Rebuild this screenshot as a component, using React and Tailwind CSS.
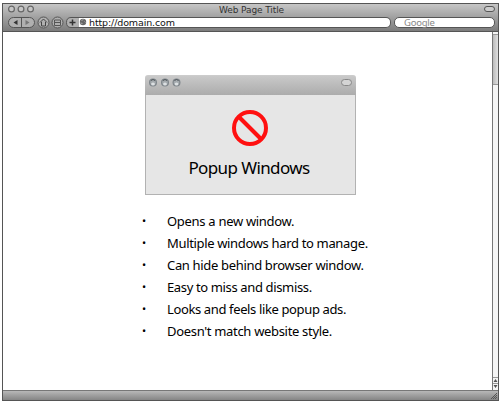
const points = [
  { text: "Opens a new window.", tracking: "tracking-[-0.3px]" },
  { text: "Multiple windows hard to manage.", tracking: "tracking-[-0.34px]" },
  { text: "Can hide behind browser window.", tracking: "tracking-[-0.33px]" },
  { text: "Easy to miss and dismiss.", tracking: "tracking-[-0.36px]" },
  { text: "Looks and feels like popup ads.", tracking: "tracking-[-0.37px]" },
  { text: "Doesn't match website style.", tracking: "tracking-[-0.32px]" },
];

function Toolbar() {
  return (
    <svg width="84" height="14" viewBox="0 0 84 14" className="block shrink-0" fill="none" stroke="#555" strokeWidth="1">
      <rect x="2.500" y="1.500" width="26" height="10" rx="5" fill="#b0b0b0" />
      <path d="M15.500 1v11" />
      <path d="M11.500 4v5L7.500 6.500z" fill="#333" stroke="none" />
      <path d="M19.500 4v5l4-2.500z" fill="#777" stroke="none" />
      <circle cx="37.500" cy="6.500" r="5.500" fill="#b0b0b0" />
      <path d="M34 6.500L37.500 3l3.500 3.500M35.500 6v4h4V6" stroke="#444" />
      <circle cx="51.500" cy="6.500" r="5.500" fill="#b0b0b0" />
      <path d="M48.500 4h6v5.500h-6zM48.500 6.500h6" stroke="#555" />
      <path d="M84 1.500H65q-4.500 0-4.500 5t4.500 5H84" fill="#b0b0b0" />
      <path d="M73 2h11v9h-11z" fill="#fff" stroke="none" />
      <path d="M63.500 6.500h6M66.500 3.500v6" stroke="#333" strokeWidth="1.500" />
      <circle cx="77" cy="6" r="3.200" fill="#666" stroke="none" />
      <path d="M75.500 4.500l2-1M74.500 7l2 .5M78.500 5.500l1 1" stroke="#bbb" strokeWidth=".8" />
    </svg>
  );
}

function Popup() {
  return (
    <div className="ml-[142px] mt-[43px] w-[211px]">
      <div className="flex h-5 justify-between rounded-t-[3px] border-t border-[#ccc] bg-linear-to-b from-[#c9c9c9] to-[#acacac] pl-1 pr-1">
        <svg width="34" height="16" viewBox="0 0 34 16" className="block">
          {[4, 16, 27.5].map((x) => (
            <g key={x}>
              <circle cx={x} cy="6.500" r="3.400" fill="#a4aaae" stroke="#7e858a" strokeWidth="1.200" />
              <path d={`M${x - 2} 4.500q2-2 4 0`} stroke="#50565b" fill="none" />
              <ellipse cx={x} cy="8" rx="1.900" ry="1.600" fill="#dce0e2" />
            </g>
          ))}
        </svg>
        <div className="mt-[3px] h-[7px] w-[11px] rounded-full border border-[#888] bg-[#d4d4d4]" />
      </div>
      <div className="flex h-[100px] flex-col items-center border border-t-0 border-[#b2b2b2] bg-[#e6e6e6]">
        <svg width="38" height="38" viewBox="0 0 38 38" className="mr-px mt-[14px] block" fill="none" stroke="#ff1010" strokeWidth="4">
          <circle cx="19" cy="19" r="16" />
          <path d="M8 8l22 22" />
        </svg>
        <div className="mr-[3px] mt-[9px] whitespace-nowrap text-[17px] leading-6 tracking-[-0.6px]">Popup Windows</div>
      </div>
    </div>
  );
}

export default function App() {
  return (
    <div className="h-[402px] w-[500px] overflow-hidden bg-white pl-0.5 pt-[3px] font-['Noto_Sans',sans-serif] text-black">
      <div className="flex h-[398px] w-[497px] flex-col border border-[#555]">
        <header className="h-7 shrink-0 border-b border-[#555] bg-linear-to-b from-[#c6c6c6] to-[#7c7c7c]">
          <div className="grid h-3 grid-cols-[60px_1fr_60px] items-center">
            <svg width="34" height="12" viewBox="0 0 34 12" className="block" fill="#c6c6c6" stroke="#666" strokeWidth="1.200">
              <circle cx="8.500" cy="5" r="2.900" />
              <circle cx="18" cy="5" r="2.900" />
              <circle cx="27.500" cy="5" r="2.900" />
            </svg>
            <div className="whitespace-nowrap pl-0.5 text-center font-['DejaVu_Sans',sans-serif] text-[9px] leading-3 tracking-[-0.1px] text-[#333]">Web Page Title</div>
            <div className="flex justify-end pr-[3px]">
              <div className="mb-0.5 h-[6px] w-[11px] rounded-full border border-[#555] bg-[#ccc]" />
            </div>
          </div>
          <div className="flex h-[14px] items-start pl-[3px]">
            <Toolbar />
            <div className="mt-px flex h-[11px] w-[301px] items-center rounded-r-[5px] border border-l-0 border-[#555] bg-white whitespace-nowrap font-['DejaVu_Sans',sans-serif] text-[9.5px] leading-[10px] tracking-[-0.12px] text-[#111]">
              <span className="-ml-px">http://domain.com</span>
            </div>
            <div className="ml-[3px] mt-px flex h-[11px] w-[101px] items-center rounded-[5px] border border-[#555] bg-white pl-[9px] text-[9.5px] leading-[10px] tracking-[-0.25px] text-[#888]">Google</div>
          </div>
        </header>
        <div className="flex min-h-0 flex-1">
          <main className="min-w-0 flex-1 overflow-hidden">
            <Popup />
            <ul className="ml-[139px] mt-[15px] text-[13px] leading-[22px]">
              {points.map((p) => (
                <li key={p.text} className="flex h-[22px] items-center whitespace-nowrap">
                  <span className="w-[25px] shrink-0 text-[11px]">•</span>
                  <span className={p.tracking}>{p.text}</span>
                </li>
              ))}
            </ul>
          </main>
          <aside className="flex w-[6px] shrink-0 flex-col border-l border-[#777] bg-[#f5f5f5]">
            <div className="h-[3px] border-b border-[#999]" />
            <div className="h-[50px] border-b border-[#999] bg-linear-to-r from-[#bcbcbc] to-[#e0e0e0]" />
            <div className="flex-1" />
            <svg width="5" height="13" viewBox="0 0 5 13" className="block shrink-0">
              <path d="M0 .5h5M0 6.500h5" stroke="#999" />
              <path d="M2.500 2l2 3h-4zM2.500 11l2-3h-4z" fill="#555" />
            </svg>
          </aside>
        </div>
        <footer className="flex h-[10px] shrink-0 justify-end border-t border-[#777] bg-linear-to-b from-[#b8b8b8] to-[#858585]">
          <svg width="8" height="9" viewBox="0 0 8 9" className="block">
            <path d="M1 8l6-6M3 8l4-4M5 8l2-2" stroke="#555" />
          </svg>
        </footer>
      </div>
    </div>
  );
}
